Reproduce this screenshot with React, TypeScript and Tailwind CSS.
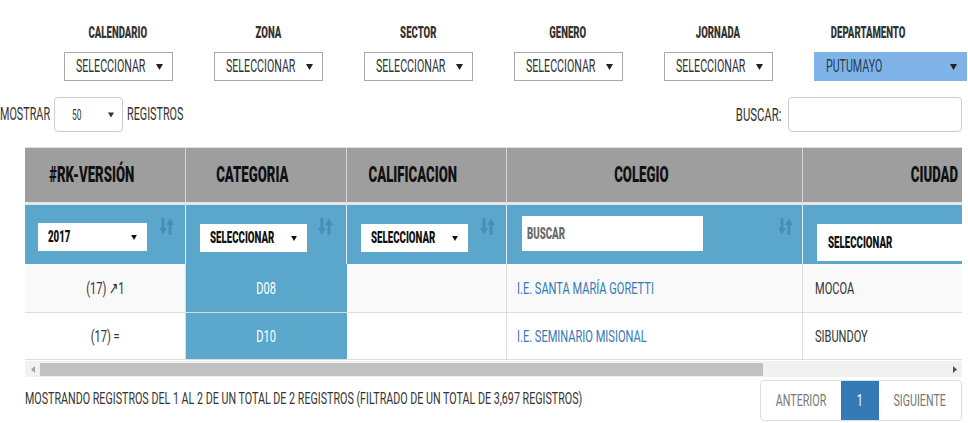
import React from "react";

type O = "l" | "c" | "r";
type K = "a" | "b" | "c" | "d" | "e";

function S({
  children,
  className = "",
  o = "l",
  k = "b",
}: {
  children: React.ReactNode;
  className?: string;
  o?: O;
  k?: K;
}) {
  const origin = o === "l" ? "origin-left" : o === "r" ? "origin-right" : "origin-center";
  const sc =
    k === "a"
      ? "scale-x-[0.56]"
      : k === "b"
      ? "scale-x-[0.63]"
      : k === "c"
      ? "scale-x-[0.65]"
      : k === "e"
      ? "scale-x-[0.57]"
      : "scale-x-[0.6]";
  return (
    <span className={`inline-block whitespace-nowrap leading-none ${origin} ${sc} ${className}`}>{children}</span>
  );
}

function Arrow({ className = "" }: { className?: string }) {
  return (
    <svg viewBox="0 0 7 6" className={`shrink-0 ${className}`} aria-hidden>
      <polygon points="0,0 7,0 3.5,6" fill="currentColor" />
    </svg>
  );
}

function SortIcon() {
  return (
    <svg viewBox="0 0 15 17" className="w-[15px] h-[17px] shrink-0 text-[#4a8db3]" aria-hidden>
      <rect x="2.5" y="0" width="3" height="11" fill="currentColor" />
      <polygon points="0,10 8,10 4,16.5" fill="currentColor" />
      <rect x="9.5" y="6" width="3" height="11" fill="currentColor" />
      <polygon points="7,7 15,7 11,0.5" fill="currentColor" />
    </svg>
  );
}

const filters = [
  { label: "CALENDARIO", value: "SELECCIONAR", active: false },
  { label: "ZONA", value: "SELECCIONAR", active: false },
  { label: "SECTOR", value: "SELECCIONAR", active: false },
  { label: "GENERO", value: "SELECCIONAR", active: false },
  { label: "JORNADA", value: "SELECCIONAR", active: false },
  { label: "DEPARTAMENTO", value: "PUTUMAYO", active: true },
];

const W = ["w-[161px]", "w-[161px]", "w-[160px]", "w-[296px]", "w-[291px]", "w-[106px]"];
const headers = ["#RK-VERSIÓN", "CATEGORIA", "CALIFICACION", "COLEGIO", "CIUDAD", ""];

const rows = [
  { rk: "(17) ↗1", cat: "D08", col: "I.E. SANTA MARÍA GORETTI", city: "MOCOA", bg: "bg-[#f9f9f9]", h: "h-[49px]" },
  { rk: "(17) =", cat: "D10", col: "I.E. SEMINARIO MISIONAL", city: "SIBUNDOY", bg: "bg-white", h: "h-[47px]" },
];

function FilterSelect({ w, text, mt, h }: { w: string; text: string; mt: string; h: string }) {
  return (
    <div className={`${w} ${mt} ${h} bg-white flex items-center pl-[10px] pr-[10px] shrink-0`}>
      <div className="flex-1 min-w-0">
        <S k="e" className="text-[17px] font-black text-[#111]">
          {text}
        </S>
      </div>
      <Arrow className="w-[6px] h-[5px] text-[#111]" />
    </div>
  );
}

export default function App() {
  return (
    <div className="w-[968px] h-[423px] overflow-hidden bg-white text-[#333] [font-family:Roboto,sans-serif]">
      {/* top filters */}
      <div className="flex pl-[43px] pt-[24px]">
        {filters.map((f) => (
          <div key={f.label} className="w-[150px] shrink-0">
            <div className="h-[18px] flex justify-center items-center">
              <S o="c" k="d" className="text-[16px] font-black text-[#333]">
                {f.label}
              </S>
            </div>
            <div
              className={`mt-[10px] ml-[21px] h-[29px] flex items-center pl-[11px] pr-[9px] border ${
                f.active
                  ? "w-[153px] bg-[#80b4e8] border-[#80b4e8] text-[#243b55]"
                  : "w-[109px] bg-white border-[#a9a9a9] text-[#333]"
              }`}
            >
              <div className="flex-1 min-w-0">
                <S k="a" className="text-[19px]">
                  {f.value}
                </S>
              </div>
              <Arrow className="w-[7px] h-[6px] text-[#222]" />
            </div>
          </div>
        ))}
      </div>

      {/* show / search */}
      <div className="mt-[16px] h-[35px] flex items-center justify-between">
        <div className="flex items-center h-full">
          <div className="w-[54px] shrink-0">
            <S k="d" className="text-[18px] text-[#333]">
              MOSTRAR
            </S>
          </div>
          <div className="w-[69px] h-[35px] rounded-[4px] border border-[#ccc] flex items-center pl-[17px] pr-[8px] shrink-0">
            <div className="flex-1 min-w-0">
              <S k="d" className="text-[14px] text-[#333]">
                50
              </S>
            </div>
            <Arrow className="w-[6px] h-[6px] text-[#333]" />
          </div>
          <div className="ml-[4px]">
            <S k="d" className="text-[18px] text-[#333]">
              REGISTROS
            </S>
          </div>
        </div>
        <div className="flex items-center mr-[6px]">
          <div className="flex justify-end">
            <S o="r" k="b" className="text-[18px] text-[#333]">
              BUSCAR:
            </S>
          </div>
          <div className="ml-[7px] w-[174px] h-[35px] rounded-[4px] border border-[#ccc] bg-white" />
        </div>
      </div>

      {/* table */}
      <div className="mt-[15px] ml-[25px] w-[937px] overflow-hidden border-t border-[#ddd]">
        <div className="w-[1175px]">
          <div className="flex h-[54px] bg-[#9e9e9e]">
            {headers.map((h, i) => (
              <div
                key={i}
                className={`${W[i]} shrink-0 h-full border-r border-[#d6d6d6] flex items-center justify-center pr-[27px]`}
              >
                <S o="c" k="d" className="text-[22px] font-black text-[#111]">
                  {h}
                </S>
              </div>
            ))}
          </div>
          <div className="h-[3px] bg-[#e6e6e6]" />
          <div className="flex h-[59px] bg-[#5ba7cc]">
            <div className={`${W[0]} shrink-0 h-full border-r border-[#dcebf3] flex items-start justify-between pl-[13px] pr-[11px]`}>
              <FilterSelect w="w-[109px]" text="2017" mt="mt-[18px]" h="h-[28px]" />
              <div className="mt-[13px]">
                <SortIcon />
              </div>
            </div>
            <div className={`${W[1]} shrink-0 h-full border-r border-[#dcebf3] flex items-start justify-between pl-[14px] pr-[13px]`}>
              <FilterSelect w="w-[107px]" text="SELECCIONAR" mt="mt-[19px]" h="h-[28px]" />
              <div className="mt-[13px]">
                <SortIcon />
              </div>
            </div>
            <div className={`${W[2]} shrink-0 h-full border-r border-[#dcebf3] flex items-start justify-between pl-[14px] pr-[11px]`}>
              <FilterSelect w="w-[107px]" text="SELECCIONAR" mt="mt-[19px]" h="h-[28px]" />
              <div className="mt-[13px]">
                <SortIcon />
              </div>
            </div>
            <div className={`${W[3]} shrink-0 h-full border-r border-[#dcebf3] flex items-start justify-between pl-[15px] pr-[9px]`}>
              <div className="mt-[11px] w-[181px] h-[35px] bg-white flex items-center pl-[5px] shrink-0">
                <S k="e" className="text-[17px] font-black text-[#6a6a6a]">
                  BUSCAR
                </S>
              </div>
              <div className="mt-[13px]">
                <SortIcon />
              </div>
            </div>
            <div className={`${W[4]} shrink-0 h-full border-r border-[#dcebf3] flex items-start pl-[14px]`}>
              <div className="mt-[19px] w-[260px] h-[37px] bg-white flex items-center pl-[11px] shrink-0">
                <S k="e" className="text-[17px] font-black text-[#111]">
                  SELECCIONAR
                </S>
              </div>
            </div>
            <div className={`${W[5]} shrink-0 h-full`} />
          </div>

          {rows.map((r) => (
            <div key={r.cat} className={`flex ${r.h} ${r.bg} border-b border-[#ddd]`}>
              <div className={`${W[0]} shrink-0 h-full border-r border-[#ddd] flex items-center justify-center`}>
                <S o="c" k="c" className="text-[17px] text-[#333]">
                  {r.rk}
                </S>
              </div>
              <div className={`${W[1]} shrink-0 h-full bg-[#5ba7cc] flex items-center justify-center`}>
                <S o="c" k="c" className="text-[17px] text-white">
                  {r.cat}
                </S>
              </div>
              <div className={`${W[2]} shrink-0 h-full border-r border-[#ddd]`} />
              <div className={`${W[3]} shrink-0 h-full border-r border-[#ddd] flex items-center pl-[10px]`}>
                <S k="c" className="text-[17px] text-[#337ab7]">
                  {r.col}
                </S>
              </div>
              <div className={`${W[4]} shrink-0 h-full border-r border-[#ddd] flex items-center pl-[12px]`}>
                <S k="c" className="text-[17px] text-[#333]">
                  {r.city}
                </S>
              </div>
              <div className={`${W[5]} shrink-0 h-full`} />
            </div>
          ))}
        </div>
      </div>

      {/* scrollbar */}
      <div className="mt-[1px] ml-[25px] w-[937px] h-[16px] bg-[#f1f1f1] flex items-center">
        <div className="w-[15px] h-full flex items-center justify-center shrink-0">
          <svg viewBox="0 0 4 7" className="w-[4px] h-[7px]" aria-hidden>
            <polygon points="4,0 4,7 0,3.5" fill="#a3a3a3" />
          </svg>
        </div>
        <div className="w-[723px] h-[13px] bg-[#c1c1c1] shrink-0" />
        <div className="flex-1" />
        <div className="w-[15px] h-full flex items-center justify-center shrink-0">
          <svg viewBox="0 0 4 7" className="w-[4px] h-[7px]" aria-hidden>
            <polygon points="0,0 4,3.5 0,7" fill="#505050" />
          </svg>
        </div>
      </div>

      {/* footer */}
      <div className="mt-[3px] h-[41px] flex items-center pl-[25px] pr-[6px]">
        <div className="flex-1 min-w-0 pb-[4px]">
          <S k="b" className="text-[17px] text-[#333]">
            MOSTRANDO REGISTROS DEL 1 AL 2 DE UN TOTAL DE 2 REGISTROS (FILTRADO DE UN TOTAL DE 3,697 REGISTROS)
          </S>
        </div>
        <div className="flex h-[41px] border border-[#ddd] rounded-[4px] overflow-hidden shrink-0">
          <div className="w-[80px] h-full flex items-center justify-center">
            <S o="c" k="b" className="text-[17px] text-[#777]">
              ANTERIOR
            </S>
          </div>
          <div className="w-[38px] h-full bg-[#337ab7] flex items-center justify-center">
            <S o="c" k="b" className="text-[17px] text-white">
              1
            </S>
          </div>
          <div className="w-[82px] h-full flex items-center justify-center">
            <S o="c" k="b" className="text-[17px] text-[#777]">
              SIGUIENTE
            </S>
          </div>
        </div>
      </div>
    </div>
  );
}
